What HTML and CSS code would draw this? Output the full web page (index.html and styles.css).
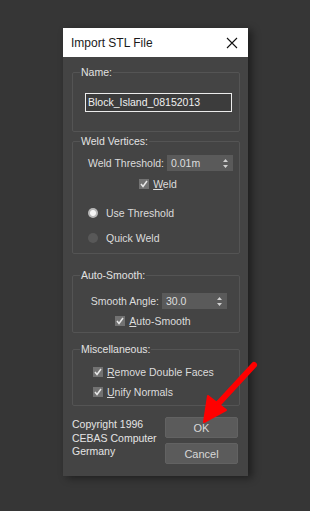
FILE: index.html
```html
<!DOCTYPE html>
<html lang="en">
<head>
  <meta charset="UTF-8" />
  <title>Import STL File</title>
  <link rel="stylesheet" href="styles.css">
</head>
<body>
  <div class="dialog">
    <div class="titlebar">
      <span class="title">Import STL File</span>
      <svg class="close" width="12" height="12" viewBox="0 0 12 12">
        <path d="M1 1L11 11M11 1L1 11" stroke="#111" stroke-width="1.1" fill="none"/>
      </svg>
    </div>

    <div class="content">
      <fieldset class="group group-name">
        <legend>Name:</legend>
        <div class="nameInput">Block_Island_08152013</div>
      </fieldset>

      <fieldset class="group group-weld">
        <legend>Weld Vertices:</legend>
        <div class="row spinRow">
          <span>Weld Threshold:</span>
          <div class="spinner wide">
            <span>0.01m</span>
            <svg class="arrows" width="5" height="9" viewBox="0 0 5 9"><path d="M2.5 0L5 3H0zM0 6H5L2.5 9z" fill="#d0d0d0"/></svg>
          </div>
        </div>
        <label class="check center weldCheck">
          <svg class="box" width="10" height="10" viewBox="0 0 10 10"><rect width="10" height="10" fill="#727272"/><path d="M2 5L4 7.5L8 2" stroke="#e8e8e8" stroke-width="1.5" fill="none"/></svg>
          <span><u>W</u>eld</span>
        </label>
        <label class="radio on"><span class="dot"></span>Use Threshold</label>
        <label class="radio"><span class="dot"></span>Quick Weld</label>
      </fieldset>

      <fieldset class="group group-smooth">
        <legend>Auto-Smooth:</legend>
        <div class="row spinRow">
          <span>Smooth Angle:</span>
          <div class="spinner">
            <span>30.0</span>
            <svg class="arrows" width="5" height="9" viewBox="0 0 5 9"><path d="M2.5 0L5 3H0zM0 6H5L2.5 9z" fill="#d0d0d0"/></svg>
          </div>
        </div>
        <label class="check center smoothCheck">
          <svg class="box" width="10" height="10" viewBox="0 0 10 10"><rect width="10" height="10" fill="#727272"/><path d="M2 5L4 7.5L8 2" stroke="#e8e8e8" stroke-width="1.5" fill="none"/></svg>
          <span><u>A</u>uto-Smooth</span>
        </label>
      </fieldset>

      <fieldset class="group group-misc">
        <legend>Miscellaneous:</legend>
        <label class="check misc">
          <svg class="box" width="10" height="10" viewBox="0 0 10 10"><rect width="10" height="10" fill="#727272"/><path d="M2 5L4 7.5L8 2" stroke="#e8e8e8" stroke-width="1.5" fill="none"/></svg>
          <span><u>R</u>emove Double Faces</span>
        </label>
        <label class="check misc">
          <svg class="box" width="10" height="10" viewBox="0 0 10 10"><rect width="10" height="10" fill="#727272"/><path d="M2 5L4 7.5L8 2" stroke="#e8e8e8" stroke-width="1.5" fill="none"/></svg>
          <span><u>U</u>nify Normals</span>
        </label>
      </fieldset>

      <div class="footer">
        <p class="copyright">Copyright 1996<br>CEBAS Computer<br>Germany</p>
        <div class="buttons">
          <button class="btn">OK</button>
          <button class="btn">Cancel</button>
        </div>
      </div>
    </div>
  </div>

  <!-- red arrow pointing at OK -->
  <svg class="pointer" width="310" height="511" viewBox="0 0 310 511">
    <line x1="254" y1="365" x2="218" y2="404" stroke="#ff0000" stroke-width="6" stroke-linecap="round"/>
    <polygon points="204,422 208,396 226,410" fill="#ff0000" stroke="#ff0000" stroke-width="2" stroke-linejoin="round"/>
  </svg>
</body>
</html>
```

FILE: styles.css
```css
body {
  margin: 0;
  background: #363636;
  font-family: "Liberation Sans", Arial, sans-serif;
  font-size: 10.5px;
  color: #dcdcdc;
  height: 511px;
  overflow: hidden;
}

.dialog {
  margin: 28px 0 0 63px;
  width: 185px;
  height: 448px;
  background: #444444;
  box-shadow: 4px 2px 8px rgba(0, 0, 0, 0.45);
}

.titlebar {
  height: 29px;
  background: #ffffff;
  display: flex;
  align-items: center;
  justify-content: space-between;
  padding: 0 10px 0 8px;
}
.title {
  color: #1a1a1a;
  font-size: 12px;
}

.content {
  padding: 8px 8px 0 9px;
}

/* group boxes */
.group {
  box-sizing: border-box;
  margin: 0;
  border: 1px solid #545454;
  border-radius: 2px;
  padding: 0 4px;
  min-width: 0;
}
.group legend {
  padding: 0 1px;
  margin-left: 3px;
  line-height: 14px;
  color: #e2e2e2;
  white-space: nowrap;
}
.group-name {
  height: 67px;
}
.group-weld {
  margin-top: 2px;
  height: 120px;
}
.group-smooth {
  margin-top: 14px;
  height: 65px;
}
.group-misc {
  margin-top: 9px;
  height: 64px;
}

.nameInput {
  margin: 14px 3px 0 8px;
  height: 17px;
  border: 1px solid #ececec;
  background: #3c3c3c;
  color: #f0f0f0;
  padding-left: 2px;
  line-height: 17px;
  white-space: nowrap;
}

.row {
  display: flex;
  align-items: center;
  justify-content: flex-end;
  white-space: nowrap;
}
.spinRow {
  gap: 3px;
  padding-right: 2px;
}
.group-weld .spinRow {
  margin-top: 7px;
}
.group-smooth .spinRow {
  margin-top: 11px;
  padding-right: 8px;
}

.spinner {
  flex-shrink: 0;
  box-sizing: border-box;
  width: 65px;
  height: 16px;
  background: #5a5a5a;
  color: #dedede;
  padding: 0 5px 0 4px;
  display: flex;
  align-items: center;
  justify-content: space-between;
}
.spinner.wide {
  width: 66px;
}

/* checkboxes and radios */
.check, .radio {
  display: flex;
  align-items: center;
  height: 20px;
  white-space: nowrap;
}
.check.center {
  justify-content: center;
}
.weldCheck {
  margin-top: 3px;
  padding-left: 4px;
}
.smoothCheck {
  margin-top: 2px;
  padding-right: 6px;
}
.box {
  margin-right: 4px;
  flex-shrink: 0;
}
.radio {
  padding-left: 11px;
  margin-top: 10px;
  height: 17px;
}
.radio + .radio {
  margin-top: 8px;
}
.dot {
  width: 10px;
  height: 10px;
  border-radius: 50%;
  background: #585858;
  margin-right: 8px;
}
.radio.on .dot {
  background: radial-gradient(circle, #f4f4f4 0 2.5px, #b8b8b8 3.5px);
}
.misc {
  padding-left: 16px;
}
.group-misc .misc:first-of-type {
  margin-top: 6px;
}

/* footer */
.footer {
  display: flex;
  justify-content: space-between;
  margin-top: 11px;
  padding-right: 2px;
}
.copyright {
  margin: 1px 0 0;
  line-height: 13.5px;
  color: #e4e4e4;
  white-space: nowrap;
}
.buttons {
  flex-shrink: 0;
  display: flex;
  flex-direction: column;
  gap: 5px;
}
.btn {
  width: 73px;
  height: 21px;
  background: #5b5b5b;
  border: 1px solid #626262;
  border-radius: 2px;
  color: #d8d8d8;
  font-family: inherit;
  font-size: 11px;
  padding: 0;
}

.pointer {
  position: absolute;
  left: 0;
  top: 0;
}
```
